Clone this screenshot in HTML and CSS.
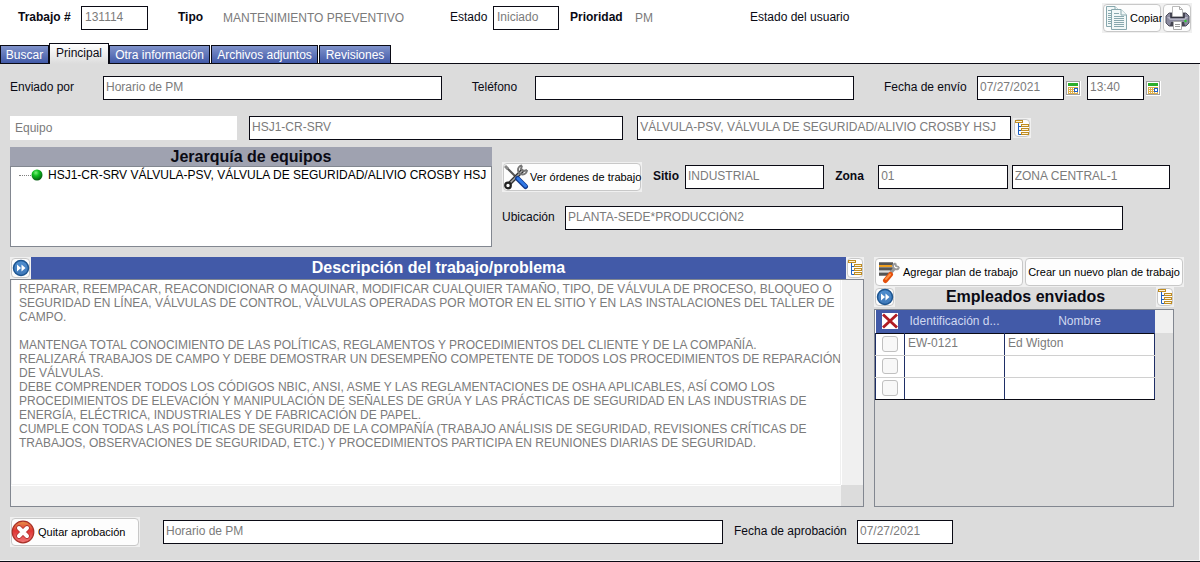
FILE: index.html
```html
<!DOCTYPE html>
<html lang="es">
  <head>
    <meta charset="UTF-8" />
    <meta name="viewport" content="width=device-width, initial-scale=1.0" />
    <title>Trabajo 131114</title>
    <link rel="stylesheet" href="styles.css">
  </head>
  <body>
    <!-- shared icons -->
    <svg class="defs" width="0" height="0" aria-hidden="true">
      <defs>
        <linearGradient id="blueball" x1="0" y1="0" x2="0" y2="1">
          <stop offset="0" stop-color="#4f8fd0" />
          <stop offset="1" stop-color="#3f78b8" />
        </linearGradient>
        <linearGradient id="redball" x1="0" y1="0" x2="0" y2="1">
          <stop offset="0" stop-color="#e8924a" />
          <stop offset="0.45" stop-color="#df3434" />
          <stop offset="1" stop-color="#f07878" />
        </linearGradient>
        <radialGradient id="greenball" cx="0.4" cy="0.3" r="0.7">
          <stop offset="0" stop-color="#7df07d" />
          <stop offset="0.4" stop-color="#10c020" />
          <stop offset="1" stop-color="#045c10" />
        </radialGradient>
      </defs>
      <symbol id="tree" viewBox="0 0 16 18">
        <path d="M4.500 4V15.500H8M4.500 7.500H8M4.500 11.500H8" fill="none" stroke="#1d5fc0" stroke-width="1" />
        <g fill="#fdf3d8" stroke="#bf8c22">
          <rect x="1.500" y="1.500" width="7" height="2" />
          <rect x="7.500" y="5.500" width="7" height="2" />
          <rect x="7.500" y="9.500" width="7" height="2" />
          <rect x="7.500" y="13.500" width="7" height="2" />
        </g>
      </symbol>
      <symbol id="forward" viewBox="0 0 18 18">
        <circle cx="9" cy="9" r="7.500" fill="url(#blueball)" stroke="#1d5590" stroke-width="1.500" />
        <path d="M5 5.500L9 9L5 12.500ZM9.500 5.500L13.500 9L9.500 12.500Z" fill="#fff" />
      </symbol>
      <symbol id="calendar" viewBox="0 0 15 15">
        <rect width="15" height="15" fill="#fff" />
        <rect x="0.500" y="0.500" width="13" height="13" fill="#fff" stroke="#a0a0a0" />
        <rect x="2" y="2" width="10" height="3" fill="#2cae2c" />
        <path d="M2 6.500H12M2 8.500H12M2 10.500H12M2 12.500H12M2.500 6V13M4.500 6V13M6.500 6V13M8.500 6V13M11.500 6V13" stroke="#dcae4c" fill="none" />
        <rect x="8.500" y="7.500" width="3" height="3" fill="#fff" stroke="#1f60c4" />
      </symbol>
    </svg>

    <header class="topbar">
      <label class="bold w-job" for="job">Trabajo #</label>
      <input class="field job" type="text" id="job" value="131114">
      <span class="bold w-type">Tipo</span>
      <span class="value w-typeval">MANTENIMIENTO PREVENTIVO</span>
      <label class="w-status" for="status">Estado</label>
      <input class="field status" type="text" id="status" value="Iniciado">
      <span class="bold w-prio">Prioridad</span>
      <span class="value w-prioval">PM</span>
      <span>Estado del usuario</span>
      <div class="actions">
        <button class="btn copy" type="button"><span>
          <svg width="23" height="26" viewBox="0 0 23 26">
            <g fill="#f2f8f8" stroke="#88a8ae">
              <path d="M1.500 1.500H10L14.500 6V21.500H1.500Z" />
              <path d="M10 1.500V6H14.500" />
              <path d="M3 8.500H12M3 10.500H12M3 12.500H12M3 14.500H12M3 16.500H12M3 18.500H12M3 5.500H8" />
              <path d="M6.500 4.500H16L21.500 10V24.500H6.500Z" />
              <path d="M16 4.500V10H21.500M9 8.500H14M9 11.500H19M9 13.500H19M9 15.500H19M9 17.500H19M9 19.500H19M9 21.500H19" />
            </g>
          </svg>Copiar</span></button>
        <button class="btn print" type="button" aria-label="Imprimir"><span>
          <svg width="25" height="26" viewBox="0 0 25 26">
            <path d="M4 8H21L24 11V18L21 21H4L1 18V11Z" fill="#8a8a9e" stroke="#50505e" />
            <path d="M2 12H23L20 15H5Z" fill="#b5b5c6" />
            <path d="M7.500 12V1.500H14.500L17.500 4.500V12Z" fill="#fff" stroke="#bbb" />
            <path d="M14.500 1.500V4.500H17.500" fill="none" stroke="#aaa" />
            <path d="M6 8V12.500H19V8" fill="none" stroke="#33333f" stroke-width="1.500" />
            <path d="M6 17H19L20 21H5Z" fill="#44444f" />
            <path d="M8.500 16.500H16.500V24.500H8.500Z" fill="#fff" stroke="#aaa" />
            <path d="M10 19.500H15M10 21.500H15" stroke="#999" />
            <circle cx="20.500" cy="16" r="1.200" fill="#2ed02e" />
          </svg></span></button>
      </div>
    </header>

    <nav class="tabs">
      <button class="tab t1" type="button">Buscar</button>
      <button class="tab t2 active" type="button">Principal</button>
      <button class="tab t3" type="button">Otra información</button>
      <button class="tab t4" type="button">Archivos adjuntos</button>
      <button class="tab t5" type="button">Revisiones</button>
    </nav>

    <main class="panel">
      <div class="row sent">
        <label class="w-by" for="sentby">Enviado por</label>
        <input class="field by" type="text" id="sentby" value="Horario de PM">
        <label class="w-phone" for="phone">Teléfono</label>
        <input class="field phone" type="text" id="phone" value="">
        <label class="w-date" for="sentdate">Fecha de envío</label>
        <input class="field date" type="text" id="sentdate" value="07/27/2021">
        <button class="cal" type="button" aria-label="Elegir fecha"><svg width="15" height="15"><use href="#calendar" /></svg></button>
        <input class="field time" type="text" aria-label="Hora de envío" value="13:40">
        <button class="cal" type="button" aria-label="Elegir hora"><svg width="15" height="15"><use href="#calendar" /></svg></button>
      </div>

      <div class="row equipment">
        <select class="kind" aria-label="Tipo de registro"><option>Equipo</option></select>
        <input class="field grow" type="text" aria-label="Código de equipo" value="HSJ1-CR-SRV">
        <input class="field grow" type="text" aria-label="Nombre de equipo" value="VÁLVULA-PSV, VÁLVULA DE SEGURIDAD/ALIVIO CROSBY HSJ">
        <button class="icon" type="button" aria-label="Ver árbol"><span><svg width="16" height="18"><use href="#tree" /></svg></span></button>
      </div>

      <div class="middle">
        <section class="hierarchy">
          <h2>Jerarquía de equipos</h2>
          <ul>
            <li><i class="dots"></i><svg width="12" height="12" viewBox="0 0 12 12"><circle cx="6" cy="6" r="5.500" fill="url(#greenball)" /></svg>HSJ1-CR-SRV VÁLVULA-PSV, VÁLVULA DE SEGURIDAD/ALIVIO CROSBY HSJ</li>
          </ul>
        </section>
        <div class="place">
          <div class="row site">
            <button class="btn orders" type="button"><span>
              <svg width="25" height="26" viewBox="0 0 25 26">
                <path d="M2 3L13 14" stroke="#555" stroke-width="2" />
                <path d="M1 2L4 5" stroke="#888" stroke-width="3" />
                <path d="M5 20L19 6" stroke="#333" stroke-width="4" />
                <path d="M6 19L19 6" stroke="#aaa" stroke-width="1.500" />
                <path d="M18 1.500A4.500 4.500 0 1 0 23 6M18 1.500L17 5L20 7L23 6" fill="none" stroke="#777" stroke-width="2" />
                <circle cx="4" cy="21.500" r="2.800" fill="#fff" stroke="#222" stroke-width="2.200" />
                <path d="M13.500 14.500L21.500 22.500" stroke="#123a8c" stroke-width="5" stroke-linecap="round" />
                <path d="M14 14.500L21.500 22" stroke="#2f78e6" stroke-width="3" stroke-linecap="round" />
              </svg>Ver órdenes de trabajo</span></button>
            <label class="bold w-site" for="site">Sitio</label>
            <input class="field sitein" type="text" id="site" value="INDUSTRIAL">
            <label class="bold w-zone" for="zone">Zona</label>
            <input class="field zone" type="text" id="zone" value="01">
            <input class="field zonename" type="text" aria-label="Nombre de zona" value="ZONA CENTRAL-1">
          </div>
          <div class="row location">
            <label class="w-loc" for="loc">Ubicación</label>
            <input class="field grow" type="text" id="loc" value="PLANTA-SEDE*PRODUCCIÓN2">
          </div>
        </div>
      </div>

      <div class="lower">
        <section class="description">
          <div class="bar">
            <button class="icon" type="button" aria-label="Expandir"><span><svg width="18" height="18"><use href="#forward" /></svg></span></button>
            <h2>Descripción del trabajo/problema</h2>
            <button class="icon" type="button" aria-label="Ver lista"><span><svg width="16" height="18"><use href="#tree" /></svg></span></button>
          </div>
          <div class="textbox">
            <textarea wrap="off" aria-label="Descripción del trabajo/problema">REPARAR, REEMPACAR, REACONDICIONAR O MAQUINAR, MODIFICAR CUALQUIER TAMAÑO, TIPO, DE VÁLVULA DE PROCESO, BLOQUEO O
SEGURIDAD EN LÍNEA, VÁLVULAS DE CONTROL, VÁLVULAS OPERADAS POR MOTOR EN EL SITIO Y EN LAS INSTALACIONES DEL TALLER DE
CAMPO.

MANTENGA TOTAL CONOCIMIENTO DE LAS POLÍTICAS, REGLAMENTOS Y PROCEDIMIENTOS DEL CLIENTE Y DE LA COMPAÑÍA.
REALIZARÁ TRABAJOS DE CAMPO Y DEBE DEMOSTRAR UN DESEMPEÑO COMPETENTE DE TODOS LOS PROCEDIMIENTOS DE REPARACIÓN
DE VÁLVULAS.
DEBE COMPRENDER TODOS LOS CÓDIGOS NBIC, ANSI, ASME Y LAS REGLAMENTACIONES DE OSHA APLICABLES, ASÍ COMO LOS
PROCEDIMIENTOS DE ELEVACIÓN Y MANIPULACIÓN DE SEÑALES DE GRÚA Y LAS PRÁCTICAS DE SEGURIDAD EN LAS INDUSTRIAS DE
ENERGÍA, ELÉCTRICA, INDUSTRIALES Y DE FABRICACIÓN DE PAPEL.
CUMPLE CON TODAS LAS POLÍTICAS DE SEGURIDAD DE LA COMPAÑÍA (TRABAJO ANÁLISIS DE SEGURIDAD, REVISIONES CRÍTICAS DE
TRABAJOS, OBSERVACIONES DE SEGURIDAD, ETC.) Y PROCEDIMIENTOS PARTICIPA EN REUNIONES DIARIAS DE SEGURIDAD.</textarea>
            <div class="vtrack"></div>
            <div class="htrack"></div>
          </div>
        </section>

        <section class="employees">
          <div class="plans">
            <button class="btn add" type="button"><span>
              <svg width="22" height="24" viewBox="0 0 22 24">
                <path d="M1 4H15M1 9H15M1 14H13" stroke="#555" stroke-width="3.500" />
                <path d="M1 6H14" stroke="#f0a020" stroke-width="2" />
                <path d="M1 11.500H12" stroke="#ddd" stroke-width="2" />
                <path d="M11 15L17 8" stroke="#999" stroke-width="3" />
                <path d="M17.500 3.500A3 3 0 1 0 21 7M17.500 3.500L18 6L21 7" fill="none" stroke="#999" stroke-width="1.800" />
                <path d="M12.500 14.500L7.500 20.500" stroke="#e4500c" stroke-width="5" stroke-linecap="round" />
                <path d="M12 14.500L8 19" stroke="#ff9040" stroke-width="2" stroke-linecap="round" />
              </svg>Agregar plan de trabajo</span></button>
            <button class="btn new" type="button"><span>Crear un nuevo plan de trabajo</span></button>
          </div>
          <div class="emphead">
            <button class="icon" type="button" aria-label="Expandir"><span><svg width="18" height="18"><use href="#forward" /></svg></span></button>
            <h2>Empleados enviados</h2>
            <button class="icon" type="button" aria-label="Ver lista"><span><svg width="16" height="18"><use href="#tree" /></svg></span></button>
          </div>
          <div class="gridbox">
            <table>
              <colgroup><col class="c-check"><col class="c-id"><col></colgroup>
              <thead>
                <tr>
                  <th><button class="del" type="button" aria-label="Eliminar"><svg width="16" height="16" viewBox="0 0 16 16"><rect width="16" height="16" fill="#fff" /><path d="M1 1.500L15 14.500M15 1.500L1 14.500" stroke="#b01c24" stroke-width="2.800" /></svg></button></th>
                  <th>Identificación d...</th>
                  <th>Nombre</th>
                </tr>
              </thead>
              <tbody>
                <tr><td><input type="checkbox" aria-label="Fila 1"></td><td>EW-0121</td><td>Ed Wigton</td></tr>
                <tr><td><input type="checkbox" aria-label="Fila 2"></td><td></td><td></td></tr>
                <tr><td><input type="checkbox" aria-label="Fila 3"></td><td></td><td></td></tr>
              </tbody>
            </table>
            <div class="corner"></div>
          </div>
        </section>
      </div>

      <div class="row approval">
        <button class="btn remove" type="button"><span>
          <svg width="24" height="24" viewBox="0 0 24 24">
            <circle cx="12" cy="12" r="10.800" fill="url(#redball)" stroke="#a83028" stroke-width="1.200" />
            <path d="M8 8L16 16M16 8L8 16" stroke="#b03030" stroke-width="5.500" stroke-linecap="round" />
            <path d="M8 8L16 16M16 8L8 16" stroke="#fff" stroke-width="4" stroke-linecap="round" />
          </svg>Quitar aprobación</span></button>
        <input class="field grow" type="text" aria-label="Aprobado por" value="Horario de PM">
        <label class="w-appr" for="apprdate">Fecha de aprobación</label>
        <input class="field apprdate" type="text" id="apprdate" value="07/27/2021">
      </div>
    </main>
  </body>
</html>
```

FILE: styles.css
```css
* {
  box-sizing: border-box;
}
body {
  margin: 0;
  min-height: 100vh;
  display: flex;
  flex-direction: column;
  background-color: white;
  color: #0a0a14;
  font-family: "Liberation Sans", Arial, sans-serif;
  font-size: 12px;
}
button,
input,
select,
textarea {
  font-family: inherit;
  font-size: 12px;
  margin: 0;
}
svg {
  display: block;
  flex: none;
}
.defs {
  position: absolute;
}
h2 {
  margin: 0;
  font-size: 16px;
  line-height: 20px;
  text-align: center;
}
label,
.topbar > span {
  flex: none;
  padding-bottom: 2px;
  white-space: nowrap;
}
.bold {
  font-weight: bold;
}
.field {
  height: 24px;
  min-width: 0;
  padding: 0 2px 3px;
  border: 1px solid #0a0a14;
  border-radius: 0;
  background-color: white;
  color: #7b7b7b;
}
.grow {
  flex: 1;
}
.value {
  color: #7b7b7b;
}

/* buttons: light square edge with a rounded face inside */
.btn,
.icon {
  flex: none;
  border: none;
  padding: 1px;
  background-color: #f0f0f0;
  color: black;
}
.btn {
  height: 30px;
  font-size: 11px;
}
.btn span,
.icon span {
  display: flex;
  align-items: center;
  height: 100%;
  border: 1px solid #c8c8c8;
  border-radius: 4px;
  background-color: #fdfdfd;
  white-space: nowrap;
}
.icon {
  width: 18px;
  height: 20px;
}
.icon span {
  justify-content: center;
}
.cal {
  flex: none;
  border: none;
  padding: 0;
  background: none;
}

/* top bar */
.topbar {
  display: flex;
  align-items: center;
  height: 43px;
  padding: 3px 8px 10px 18px;
}
.topbar .actions {
  display: flex;
  margin-left: auto;
}
.topbar .field {
  padding-left: 3px;
}
.topbar .value {
  padding-bottom: 0;
}
.w-job { width: 63px; }
.job { width: 67px; }
.w-type { width: 45px; margin-left: 30px; }
.w-typeval { width: 227px; }
.w-status { width: 43px; }
.status { width: 66px; }
.w-prio { width: 65px; margin-left: 11px; }
.w-prioval { width: 115px; }
.copy {
  width: 60px;
}
.copy span {
  gap: 2px;
  padding-left: 1px;
}
.print {
  width: 30px;
}
.print span {
  justify-content: center;
}

/* tabs */
.tabs {
  display: flex;
  align-items: flex-end;
  height: 21px;
  border-bottom: 1px solid #0a0a14;
}
.tab {
  height: 18px;
  padding: 0;
  margin-right: 1px;
  border: 1px solid #0a0a14;
  border-bottom: none;
  background: linear-gradient(#8093cb, #425aa8);
  color: white;
  white-space: nowrap;
}
.tab.active {
  height: 21px;
  margin-bottom: -1px;
  padding-bottom: 3px;
  background: linear-gradient(white, #dcdcdc);
  color: #0a0a14;
}
.t1 { width: 49px; margin-right: 0; }
.t2 { width: 60px; margin-right: 0; }
.t3 { width: 101px; }
.t4 { width: 107px; }
.t5 { width: 72px; }

/* main panel */
.panel {
  flex: 1;
  display: flex;
  flex-direction: column;
  padding: 12px 15px 13px 10px;
  margin-bottom: 2px;
  background-color: #dcdcdc;
  border-right: 1px solid #f5f5f5;
  box-shadow: 0 1px #f5f5f5, 0 2px #0a0a14;
}
.row {
  display: flex;
  align-items: center;
}
.sent {
  padding-right: 23px;
}
.w-by { width: 93px; }
.by { flex: 339; }
.w-phone { width: 63px; margin-left: 30px; }
.phone { flex: 319; }
.w-date { width: 93px; margin-left: 30px; }
.date { width: 87px; margin-right: 2px; }
.time { width: 57px; margin: 0 2px 0 6px; }
.equipment {
  margin-top: 16px;
  padding-right: 13%;
}
.kind {
  width: 227px;
  height: 24px;
  margin-right: 12px;
  padding: 0 5px;
  border: none;
  appearance: none;
  background-color: white;
  color: #7b7b7b;
}
.equipment .field + .field {
  margin: 0 2px 0 14px;
}

.middle {
  display: flex;
  gap: 10px;
  margin-top: 7px;
  padding-right: 14px;
}
.hierarchy {
  flex: 482;
  height: 100px;
  display: flex;
  flex-direction: column;
  min-width: 0;
}
.hierarchy h2 {
  height: 19px;
  background-color: #9fa2b0;
}
.hierarchy ul {
  flex: 1;
  margin: 0;
  padding: 1px 0 0 8px;
  border: 1px solid #828790;
  background-color: white;
  list-style: none;
  overflow: hidden;
}
.hierarchy li {
  display: flex;
  align-items: center;
  height: 14px;
  color: black;
  white-space: nowrap;
}
.hierarchy li svg {
  margin-right: 5px;
}
.dots {
  flex: none;
  width: 12px;
  border-top: 1px dotted #808080;
}
.place {
  flex: 668;
  min-width: 0;
  padding-top: 15px;
}
.orders {
  width: 140px;
}
.orders span {
  gap: 1px;
}
.w-site { width: 32px; margin-left: 11px; }
.sitein { flex: 139; }
.w-zone { width: 43px; margin-left: 11px; }
.zone { flex: 129; }
.zonename { flex: 159; margin-left: 4px; }
.location {
  margin-top: 14px;
  padding-right: 47px;
}
.w-loc { width: 63px; }

.lower {
  flex: 1;
  display: flex;
  gap: 10px;
  margin-top: 10px;
}
.description {
  flex: 1;
  display: flex;
  flex-direction: column;
  min-width: 0;
}
.bar {
  display: flex;
  height: 22px;
  background-color: #425aa8;
  color: white;
}
.bar h2 {
  flex: 1;
  line-height: 22px;
}
.bar .icon {
  height: 22px;
}
.bar .icon:first-child,
.emphead .icon:first-child {
  width: 21px;
}
.textbox {
  flex: 1;
  display: grid;
  grid-template: 1fr 21px / 1fr 22px;
  border: 1px solid #828790;
}
.textbox textarea {
  width: 100%;
  height: 100%;
  min-height: 200px;
  padding: 2px 0 2px 7px;
  border: 1px solid #f0f0f0;
  border-top: none;
  background-color: white;
  color: #7b7b7b;
  line-height: 14px;
  resize: none;
  overflow: hidden;
}
.vtrack {
  background-color: #f0f0f0;
  border-left: 1px solid white;
}
.htrack {
  background-color: #f0f0f0;
  border-top: 1px solid white;
}

.employees {
  width: 310px;
  display: flex;
  flex-direction: column;
}
.plans {
  display: flex;
}
.add {
  width: 150px;
}
.add span {
  gap: 3px;
  padding-left: 2px;
}
.new {
  width: 160px;
}
.new span {
  justify-content: center;
}
.emphead {
  display: flex;
  margin-right: 10px;
}
.emphead h2 {
  flex: 1;
}
.gridbox {
  flex: 1;
  display: flex;
  align-items: flex-start;
  margin: 2px 10px 0 0;
  border: 1px solid #828790;
}
.corner {
  width: 18px;
  height: 23px;
  background-color: #f0f0f0;
}
table {
  flex: 1;
  table-layout: fixed;
  border-collapse: collapse;
  background-color: white;
  color: #7b7b7b;
}
.c-check { width: 29px; }
.c-id { width: 100px; }
thead tr {
  height: 23px;
  background-color: #425aa8;
}
th {
  padding: 0;
  color: #d0d8f0;
  font-weight: normal;
}
tbody tr {
  height: 22px;
}
td {
  height: 22px;
  padding: 0 3px 2px;
  border: 1px solid #1e2e66;
  border-top-color: #d0d0d0;
  border-bottom-color: #d0d0d0;
}
td:first-child {
  padding: 0;
}
tbody {
  border: 1px solid #0a0a14;
}
tbody tr:first-child td {
  border-top-color: #0a0a14;
}
tbody tr:last-child td {
  border-bottom-color: #0a0a14;
}
td input {
  appearance: none;
  display: block;
  width: 16px;
  height: 16px;
  margin: 0 auto;
  border: 1px solid #c0c0c0;
  border-radius: 3px;
  background-color: #f8f8f8;
}
.del {
  display: block;
  margin: 0 auto;
  padding: 0;
  border: none;
  background: none;
}

.approval {
  margin-top: 10px;
  padding-right: 231px;
}
.remove {
  width: 130px;
  margin-right: 23px;
}
.remove span {
  gap: 3px;
}
.remove svg {
  margin-left: -1px;
}
.w-appr { width: 123px; margin-left: 11px; }
.apprdate { width: 96px; }
```
